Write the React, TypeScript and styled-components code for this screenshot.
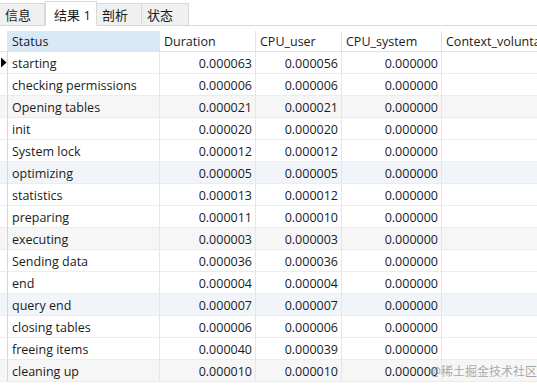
import React from "react";
import styled, { createGlobalStyle } from "styled-components";

const Global = createGlobalStyle`
  html, body { margin: 0; padding: 0; background: #ffffff; }
  body {
    font-family: "Open Sans", "Noto Sans CJK SC", sans-serif;
    font-size: 12.5px;
    color: #1b1b1b;
    overflow: hidden;
  }
`;

const Page = styled.div`
  position: relative;
  width: 537px;
  height: 386px;
  overflow: hidden;
  background: #ffffff;
`;

const TabBar = styled.div`
  display: flex;
  align-items: flex-end;
  height: 26px;
  box-sizing: border-box;
  border-bottom: 1px solid #d9d9d9;
`;

const Tab = styled.div<{ $active?: boolean; $w: number }>`
  box-sizing: border-box;
  width: ${(p) => p.$w}px;
  height: ${(p) => (p.$active ? 25 : 22)}px;
  margin-bottom: ${(p) => (p.$active ? -1 : 0)}px;
  background: ${(p) => (p.$active ? "#ffffff" : "#f0f0f0")};
  border: 1px solid #d9d9d9;
  border-bottom: ${(p) => (p.$active ? "1px solid #ffffff" : "none")};
  border-left: ${(p) => (p.$active ? "1px solid #d9d9d9" : "none")};
  display: flex;
  align-items: center;
  padding-left: ${(p) => (p.$active ? 8 : 5)}px;
  padding-top: ${(p) => (p.$active ? 1 : 0)}px;
  font-size: 13px;
  color: #1b1b1b;
  white-space: nowrap;
`;

const Spacer = styled.div`
  height: 5px;
`;

const Grid = styled.div`
  display: grid;
  grid-template-columns: 8px 152px 96px 86px 100px 140px;
  width: 582px;
`;

const HeadCell = styled.div<{ $selected?: boolean }>`
  box-sizing: border-box;
  height: 21px;
  display: flex;
  align-items: center;
  padding: 1px 0 0 4px;
  background: ${(p) => (p.$selected ? "#d9e8f7" : "#ffffff")};
  border-right: 1px solid #e3e3e3;
  border-bottom: 1px solid #e3e3e3;
  white-space: nowrap;
  overflow: hidden;
`;

type Tone = "white" | "grey" | "blue";
const bg = (t: Tone) => (t === "grey" ? "#f6f6f6" : t === "blue" ? "#f1f5fa" : "#ffffff");

const Cell = styled.div<{ $tone: Tone; $num?: boolean }>`
  box-sizing: border-box;
  height: 22px;
  display: flex;
  align-items: center;
  justify-content: ${(p) => (p.$num ? "flex-end" : "flex-start")};
  padding: 1px 3px 0 4px;
  background: ${(p) => bg(p.$tone)};
  border-right: 1px solid #e6e6e6;
  border-bottom: 1px solid #ececec;
  white-space: nowrap;
  overflow: hidden;
`;

const Marker = styled.div<{ $tone: Tone }>`
  box-sizing: border-box;
  height: 22px;
  display: flex;
  align-items: center;
  background: ${(p) => bg(p.$tone)};
  border-right: 1px solid #d6d6d6;
  border-bottom: 1px solid #ececec;
`;

const Watermark = styled.div`
  position: absolute;
  right: 0px;
  bottom: 6px;
  font-size: 12px;
  color: rgba(140, 140, 140, 0.75);
  white-space: nowrap;
`;

const rows: [string, string, string, string][] = [
  ["starting", "0.000063", "0.000056", "0.000000"],
  ["checking permissions", "0.000006", "0.000006", "0.000000"],
  ["Opening tables", "0.000021", "0.000021", "0.000000"],
  ["init", "0.000020", "0.000020", "0.000000"],
  ["System lock", "0.000012", "0.000012", "0.000000"],
  ["optimizing", "0.000005", "0.000005", "0.000000"],
  ["statistics", "0.000013", "0.000012", "0.000000"],
  ["preparing", "0.000011", "0.000010", "0.000000"],
  ["executing", "0.000003", "0.000003", "0.000000"],
  ["Sending data", "0.000036", "0.000036", "0.000000"],
  ["end", "0.000004", "0.000004", "0.000000"],
  ["query end", "0.000007", "0.000007", "0.000000"],
  ["closing tables", "0.000006", "0.000006", "0.000000"],
  ["freeing items", "0.000040", "0.000039", "0.000000"],
  ["cleaning up", "0.000010", "0.000010", "0.000000"],
];

const toneOf = (i: number): Tone => {
  if (i % 3 !== 2) return "white";
  return (i / 3) % 2 < 1 ? "grey" : "blue";
};

export default function App() {
  return (
    <Page>
      <Global />
      <TabBar>
        <Tab $w={45}>信息</Tab>
        <Tab $w={52} $active>结果 1</Tab>
        <Tab $w={45}>剖析</Tab>
        <Tab $w={47}>状态</Tab>
      </TabBar>
      <Spacer />
      <Grid>
        <HeadCell />
        <HeadCell $selected>Status</HeadCell>
        <HeadCell>Duration</HeadCell>
        <HeadCell>CPU_user</HeadCell>
        <HeadCell>CPU_system</HeadCell>
        <HeadCell>Context_voluntary</HeadCell>
        {rows.map((r, i) => {
          const tone = toneOf(i);
          return (
            <React.Fragment key={i}>
              <Marker $tone={tone}>
                {i === 0 && (
                  <svg width="7" height="11" viewBox="0 0 7 11">
                    <path d="M1 0.5 L6.5 5.5 L1 10.5 Z" fill="#000" />
                  </svg>
                )}
              </Marker>
              <Cell $tone={tone}>{r[0]}</Cell>
              <Cell $tone={tone} $num>{r[1]}</Cell>
              <Cell $tone={tone} $num>{r[2]}</Cell>
              <Cell $tone={tone} $num>{r[3]}</Cell>
              <Cell $tone={tone} />
            </React.Fragment>
          );
        })}
      </Grid>
      <Watermark>@稀土掘金技术社区</Watermark>
    </Page>
  );
}
